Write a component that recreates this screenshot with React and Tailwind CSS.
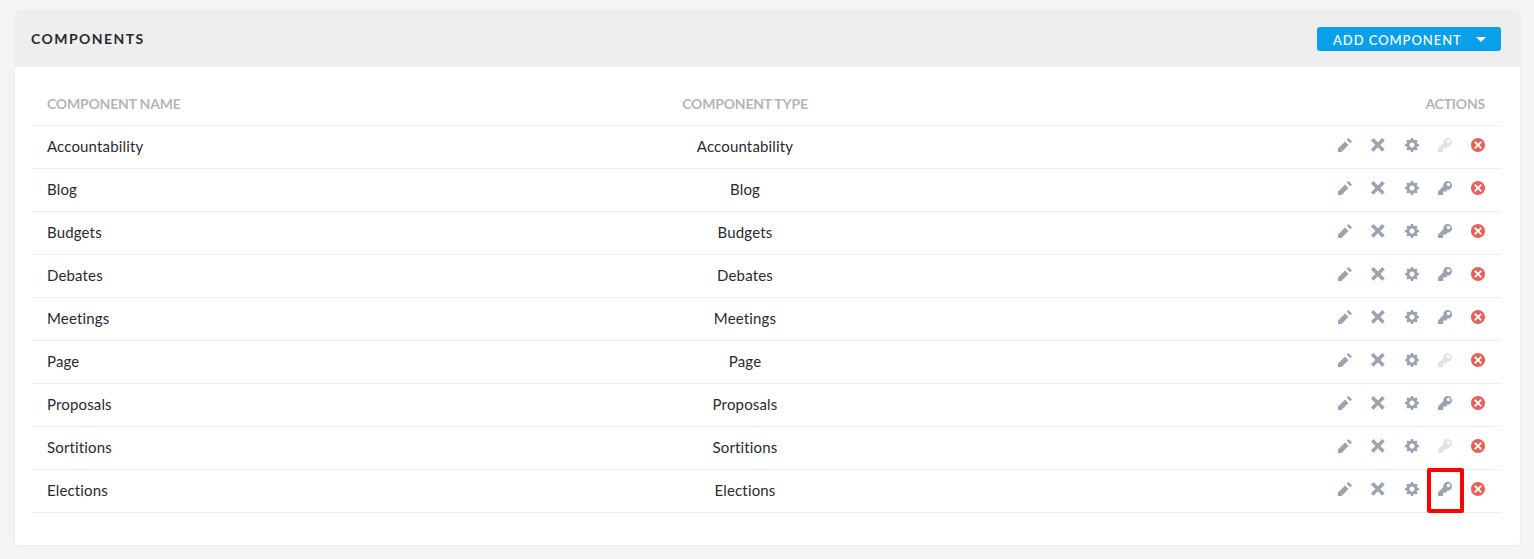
const icons = {
  pencil: "M6 0l-1 1 2 2 1-1-2-2zm-2 2l-4 4v2h2l4-4-2-2z",
  x: "M1.41 0l-1.41 1.41.72.72 1.78 1.81-1.78 1.78-.72.69 1.41 1.44.72-.72 1.81-1.81 1.78 1.81.69.72 1.44-1.44-.72-.69-1.81-1.78 1.81-1.81.72-.72-1.44-1.41-.69.72-1.78 1.78-1.81-1.78-.72-.72z",
  cog: "M3.5 0l-.5 1.19c-.1.03-.19.08-.28.13l-1.19-.5-.72.72.5 1.19c-.05.1-.09.18-.13.28l-1.19.5v1l1.19.5c.04.1.08.18.13.28l-.5 1.19.72.72 1.19-.5c.09.04.18.09.28.13l.5 1.19h1l.5-1.19c.09-.04.19-.08.28-.13l1.19.5.72-.72-.5-1.19c.04-.09.09-.19.13-.28l1.19-.5v-1l-1.19-.5c-.03-.09-.08-.19-.13-.28l.5-1.19-.72-.72-1.19.5c-.09-.04-.19-.09-.28-.13l-.5-1.19h-1zm.5 2.5c.83 0 1.5.67 1.5 1.5s-.67 1.5-1.5 1.5-1.5-.67-1.5-1.5.67-1.5 1.5-1.5z",
  key: "M5.5 0c-1.38 0-2.5 1.12-2.5 2.5 0 .16 0 .32.03.47l-3.03 3.03v2h3v-2h2v-1l.03-.03c.15.03.31.03.47.03 1.38 0 2.5-1.12 2.5-2.5s-1.12-2.5-2.5-2.5zm.5 1c.55 0 1 .45 1 1s-.45 1-1 1-1-.45-1-1 .45-1 1-1z",
  close: "M4 0c-2.21 0-4 1.79-4 4s1.79 4 4 4 4-1.79 4-4-1.79-4-4-4zm-1.5 1.78l1.5 1.5 1.5-1.5.72.72-1.5 1.5 1.5 1.5-.72.72-1.5-1.5-1.5 1.5-.72-.72 1.5-1.5-1.5-1.5.72-.72z",
};

const Icon = ({ name, className }) => (
  <svg viewBox="0 0 8 8" className={`w-[14px] h-[14px] fill-current ${className}`}>
    <path d={icons[name]} />
  </svg>
);

const rows = [
  { name: "Accountability", keyOff: true },
  { name: "Blog" },
  { name: "Budgets" },
  { name: "Debates" },
  { name: "Meetings" },
  { name: "Page", keyOff: true },
  { name: "Proposals" },
  { name: "Sortitions", keyOff: true },
  { name: "Elections", marked: true },
];

const App = () => {
  return (
    <div className="min-h-[559px] bg-[#f4f4f4] pt-[10px] px-[14px] pr-[13px] font-['Lato','Open_Sans',sans-serif] text-[#2c2930]">
      <div className="h-[536px] bg-white border border-[#eeeeee] rounded-[4px] overflow-hidden">
        {/* Card header */}
        <div className="h-[56px] bg-[#eeeeee] flex items-center justify-between pl-[16px] pr-[19px]">
          <h2 className="text-[14px] font-bold tracking-[1.45px] uppercase -mt-[2px]">Components</h2>
          <button className="w-[184px] h-[24px] bg-[#0a9fe9] text-white rounded-[3px] flex items-center pl-[16px] text-[13px] font-medium tracking-[0.95px] uppercase">
            <span className="pt-[3px]">Add component</span>
            <span className="ml-auto mr-[15px] w-0 h-0 border-x-[5px] border-x-transparent border-t-[5px] border-t-white"></span>
          </button>
        </div>

        {/* Table */}
        <div className="ml-[17px] mr-[19px] mt-[16px]">
          <div className="grid grid-cols-[500px_426px_1fr] items-center h-[43px] border-b border-[#eeeeee] text-[14px] font-bold tracking-[-0.2px] text-[#b5b5b5] uppercase">
            <div className="pl-[15px] -mt-[2px]">Component name</div>
            <div className="text-center -mt-[2px]">Component type</div>
            <div className="text-right pr-[16px] -mt-[2px]">Actions</div>
          </div>
          {rows.map((row) => (
            <div key={row.name} className="grid grid-cols-[500px_426px_1fr] items-center h-[43px] border-b border-[#eeeeee] text-[15px] tracking-[0.15px]">
              <div className="pl-[15px] -mt-[1px]">{row.name}</div>
              <div className="text-center -mt-[1px]">{row.name}</div>
              <div className="flex justify-end gap-[19.2px] pr-[16px] text-[#9aa3b1] -translate-y-[2px]">
                <Icon name="pencil" />
                <Icon name="x" />
                <Icon name="cog" />
                <div className="relative">
                  <Icon name="key" className={row.keyOff ? "opacity-30" : ""} />
                  {row.marked && (
                    <div className="absolute left-[-11px] top-[-14px] w-[37px] h-[45px] border-[4px] border-[#ff0000] rounded-[2px]"></div>
                  )}
                </div>
                <Icon name="close" className="text-[#e5625a]" />
              </div>
            </div>
          ))}
        </div>
      </div>
    </div>
  );
};

export default App;
